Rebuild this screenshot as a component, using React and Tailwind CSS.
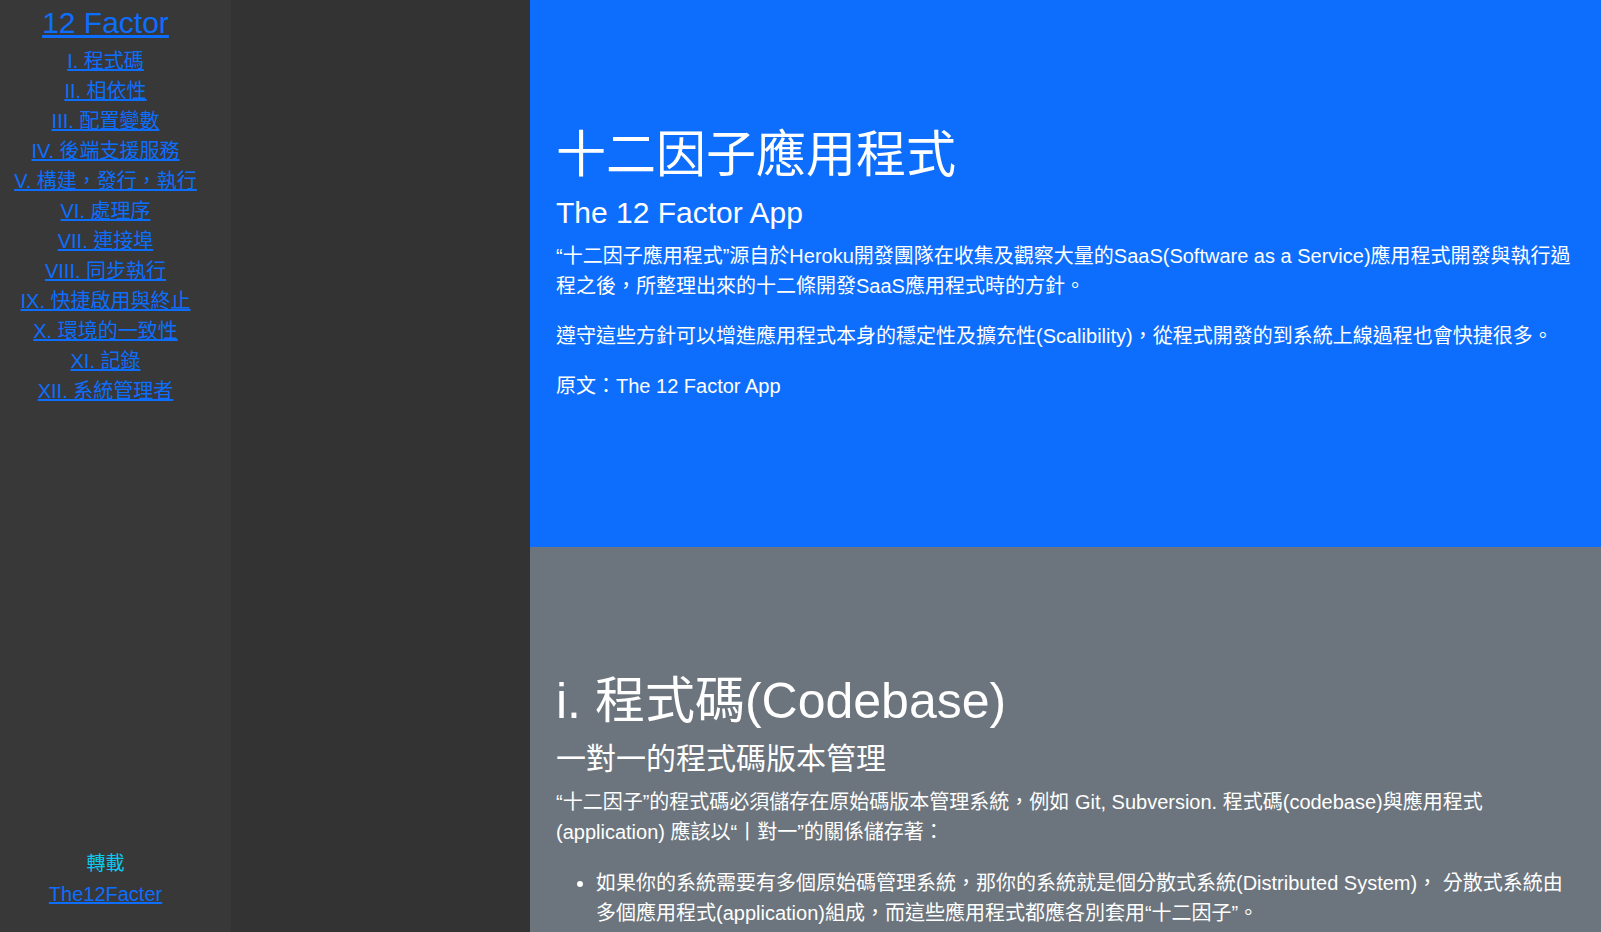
import React from "react";

const navItems = [
  "I. 程式碼",
  "II. 相依性",
  "III. 配置變數",
  "IV. 後端支援服務",
  "V. 構建，發行，執行",
  "VI. 處理序",
  "VII. 連接埠",
  "VIII. 同步執行",
  "IX. 快捷啟用與終止",
  "X. 環境的一致性",
  "XI. 記錄",
  "XII. 系統管理者",
];

export default function App() {
  return (
    <div className="flex h-[932px] w-full overflow-hidden bg-[#333333] font-['Liberation_Sans','Noto_Sans_CJK_TC',sans-serif] text-white">
      {/* Sidebar */}
      <aside className="flex h-full w-[231px] shrink-0 flex-col bg-[#383838] pr-[20px] pt-[5px] pb-[23px] text-center">
        <h4 className="mb-[5px] text-[30px] leading-[36px] font-normal">
          <a href="#" className="text-[#0d6efd] underline">12 Factor</a>
        </h4>
        <nav className="flex flex-col">
          {navItems.map((t) => (
            <div key={t} className="text-[20px] leading-[30px]">
              <a href="#" className="text-[#0d6efd] underline">{t}</a>
            </div>
          ))}
        </nav>
        <div className="mt-auto flex flex-col">
          <div className="text-[19px] leading-[30px] text-[#0dcaf0]">轉載</div>
          <div className="text-[20px] leading-[30px]">
            <a href="#" className="text-[#0d6efd] underline">The12Facter</a>
          </div>
        </div>
      </aside>

      {/* Spacer strip */}
      <div className="h-full w-[299px] shrink-0 bg-[#333333]" />

      {/* Main */}
      <main className="flex h-full min-w-0 flex-1 flex-col">
        <section className="flex h-[547px] shrink-0 flex-col justify-center bg-[#0d6efd] px-[26px] pb-[1px]">
          <h1 className="mb-[10px] text-[50px] leading-[60px] font-normal">十二因子應用程式</h1>
          <h4 className="mb-[10px] text-[30px] leading-[36px] font-normal">The 12 Factor App</h4>
          <p className="mb-[20px] text-[20px] leading-[30px]">
            “十二因子應用程式”源自於Heroku開發團隊在收集及觀察大量的SaaS(Software as a Service)應用程式開發與執行過程之後，所整理出來的十二條開發SaaS應用程式時的方針。
          </p>
          <p className="mb-[20px] text-[20px] leading-[30px]">
            遵守這些方針可以增進應用程式本身的穩定性及擴充性(Scalibility)，從程式開發的到系統上線過程也會快捷很多。
          </p>
          <p className="mb-[20px] text-[20px] leading-[30px]">原文：The 12 Factor App</p>
        </section>

        <section className="flex-1 bg-[#6c757d] px-[26px] pt-[124px]">
          <h1 className="mb-[10px] text-[50px] leading-[60px] font-normal">i. 程式碼(Codebase)</h1>
          <h4 className="mb-[10px] text-[30px] leading-[36px] font-normal">一對一的程式碼版本管理</h4>
          <p className="mb-[21px] text-[20px] leading-[30px]">
            “十二因子”的程式碼必須儲存在原始碼版本管理系統，例如 Git, Subversion. 程式碼(codebase)與應用程式(application) 應該以“丨對一”的關係儲存著：
          </p>
          <ul className="list-disc pl-[40px] text-[20px] leading-[30px]">
            <li>
              如果你的系統需要有多個原始碼管理系統，那你的系統就是個分散式系統(Distributed System)， 分散式系統由多個應用程式(application)組成，而這些應用程式都應各別套用“十二因子”。
            </li>
          </ul>
        </section>
      </main>
    </div>
  );
}
